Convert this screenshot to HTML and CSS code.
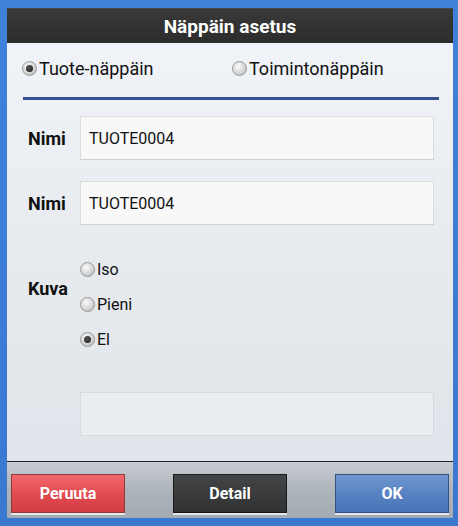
FILE: index.html
```html
<!DOCTYPE html>
<html>
<head>
<meta charset="utf-8">
<link rel="stylesheet" href="styles.css">
</head>
<body>
<div class="dialog">
  <div class="title">Näppäin asetus</div>
  <div class="content">
    <div class="type-row">
      <label class="radio type-a"><span class="dot on"></span>Tuote-näppäin</label>
      <label class="radio type-b"><span class="dot"></span>Toimintonäppäin</label>
    </div>
    <div class="rule"></div>
    <div class="field first">
      <div class="label">Nimi</div>
      <div class="input">TUOTE0004</div>
    </div>
    <div class="field second">
      <div class="label">Nimi</div>
      <div class="input">TUOTE0004</div>
    </div>
    <div class="field image">
      <div class="label kuva">Kuva</div>
      <div class="options">
        <label class="radio opt"><span class="dot"></span>Iso</label>
        <label class="radio opt"><span class="dot"></span>Pieni</label>
        <label class="radio opt"><span class="dot on"></span>El</label>
      </div>
    </div>
    <div class="field empty">
      <div class="label"></div>
      <div class="input blank"></div>
    </div>
  </div>
  <div class="footer">
    <div class="btn cancel">Peruuta</div>
    <div class="btn detail">Detail</div>
    <div class="btn ok">OK</div>
  </div>
</div>
</body>
</html>
```
FILE: styles.css
```css
html, body {
  margin: 0;
  padding: 0;
}
body {
  width: 458px;
  height: 526px;
  background: linear-gradient(180deg, #3f82da 0%, #3a78d0 100%);
  font-family: Roboto, "Noto Sans", "Liberation Sans", sans-serif;
  overflow: hidden;
}
.dialog {
  margin: 8px 0 0 7px;
  width: 446px;
  height: 510px;
  display: flex;
  flex-direction: column;
  background: #eef2f6;
}
.title {
  height: 35px;
  line-height: 35px;
  background: linear-gradient(180deg, #393939 0%, #2c2c2c 100%);
  color: #ffffff;
  font-weight: bold;
  font-size: 19px;
  text-align: center;
  border-top: 1px solid #4a4a4a;
  box-sizing: border-box;
}
.content {
  height: 418px;
  background: linear-gradient(180deg, #f0f3f8 0%, #e6eaef 55%, #dfe5ea 100%);
  display: flex;
  flex-direction: column;
}
.type-row {
  display: flex;
  margin-top: 13px;
  height: 24px;
  align-items: center;
}
.radio {
  display: flex;
  align-items: center;
  font-size: 18px;
  color: #111;
}
.type-a {
  margin-left: 15px;
  width: 210px;
}
.dot {
  width: 13px;
  height: 13px;
  border-radius: 50%;
  border: 1px solid #999;
  background: radial-gradient(circle at 40% 35%, #fbfbfb 0%, #d2d2d2 60%, #a8a8a8 100%);
  margin-right: 2px;
  position: relative;
  flex: none;
}
.dot.on::after {
  content: "";
  position: absolute;
  left: 3px;
  top: 3px;
  width: 7px;
  height: 7px;
  border-radius: 50%;
  background: radial-gradient(circle at 40% 35%, #555 0%, #1a1a1a 100%);
}
.rule {
  margin: 17px 14px 0 16px;
  height: 3px;
  background: #35528f;
}
.field {
  display: grid;
  grid-template-columns: 73px 1fr;
  margin-right: 19px;
  align-items: center;
}
.field.first {
  margin-top: 16px;
}
.field.second {
  margin-top: 21px;
}
.label {
  padding-left: 21px;
  font-weight: bold;
  font-size: 18px;
  color: #111;
}
.label.kuva {
  align-self: start;
  padding-top: 26px;
}
.input {
  height: 44px;
  box-sizing: border-box;
  background: #f8f8f8;
  border: 1px solid #dcdcdc;
  border-bottom-color: #cfcfcf;
  font-size: 16px;
  color: #111;
  display: flex;
  align-items: center;
  padding-left: 8px;
}
.field.image {
  margin-top: 27px;
}
.options {
  display: flex;
  flex-direction: column;
}
.opt {
  height: 35px;
  font-size: 16px;
}
.field.empty {
  margin-top: 35px;
}
.input.blank {
  background: #e9edf1;
  border-color: #d6dadf;
}
.footer {
  flex: 1;
  border-top: 1px solid #1e2226;
  background: linear-gradient(180deg, #c7ccd2 0%, #aeb4bb 50%, #a3aab2 100%);
  display: flex;
  justify-content: space-between;
  align-items: flex-start;
  padding: 12px 4px 0 4px;
}
.btn {
  width: 114px;
  height: 39px;
  box-sizing: border-box;
  display: flex;
  align-items: center;
  justify-content: center;
  color: #fff;
  font-weight: bold;
  font-size: 16px;
  border: 1px solid #3a3a3a;
  box-shadow: 0 2px 0 #e4e7ea;
}
.cancel {
  background: linear-gradient(180deg, #f2676c 0%, #e04a50 55%, #d43c43 100%);
  border-color: #8e3a3e;
}
.detail {
  background: linear-gradient(180deg, #424446 0%, #303234 100%);
  border-color: #1a1a1a;
}
.ok {
  background: linear-gradient(180deg, #6f97cf 0%, #5681c1 55%, #4a74b6 100%);
  border-color: #34507c;
}
```
